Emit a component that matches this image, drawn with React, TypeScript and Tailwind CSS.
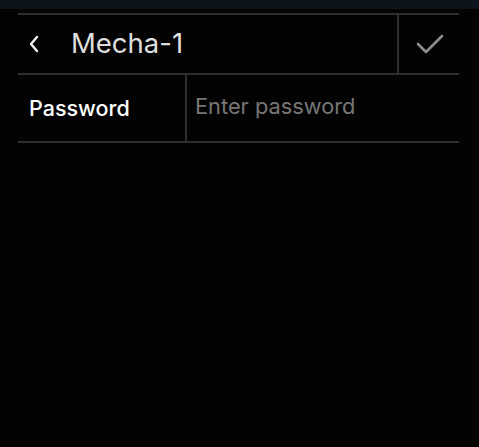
export default function App() {
  return (
    <div className="min-h-screen w-[479px] h-[447px] bg-[#030303] font-['Inter',sans-serif]">
      <div className="h-[9px] bg-[#0e141b]" />
      <div className="ml-[18px] mt-[4px] w-[441px]">
        {/* header row */}
        <div className="flex h-[62px] border-y-2 border-[#2e2e2e]">
          <div className="flex flex-1 items-center border-r-2 border-[#2e2e2e]">
            <svg width="12" height="18" viewBox="0 0 12 18" className="ml-[10px]" fill="none">
              <path d="M9 2 L3 9 L9 16" stroke="#f2f2f2" strokeWidth="2.4" strokeLinecap="round" strokeLinejoin="round" />
            </svg>
            <span className="ml-[31px] text-[27.5px] leading-none text-[#dedede]">Mecha-1</span>
          </div>
          <div className="flex w-[60px] items-center justify-center">
            <svg width="28" height="22" viewBox="0 0 28 22" fill="none" className="ml-[2px]">
              <path d="M2 11 L10 19 L26 3" stroke="#8c8c8c" strokeWidth="2.6" strokeLinecap="round" strokeLinejoin="round" />
            </svg>
          </div>
        </div>
        {/* password row */}
        <div className="flex h-[68px] border-b-2 border-[#2e2e2e]">
          <div className="flex w-[169px] items-center border-r-2 border-[#2e2e2e] pl-[11px]">
            <span className="text-[21.5px] font-medium text-white">Password</span>
          </div>
          <div className="flex flex-1 items-center pl-[8px]">
            <input
              type="password"
              placeholder="Enter password"
              className="w-full bg-transparent text-[21.8px] text-white outline-none placeholder:text-[#767676] -mt-[4px]"
            />
          </div>
        </div>
      </div>
    </div>
  );
}
